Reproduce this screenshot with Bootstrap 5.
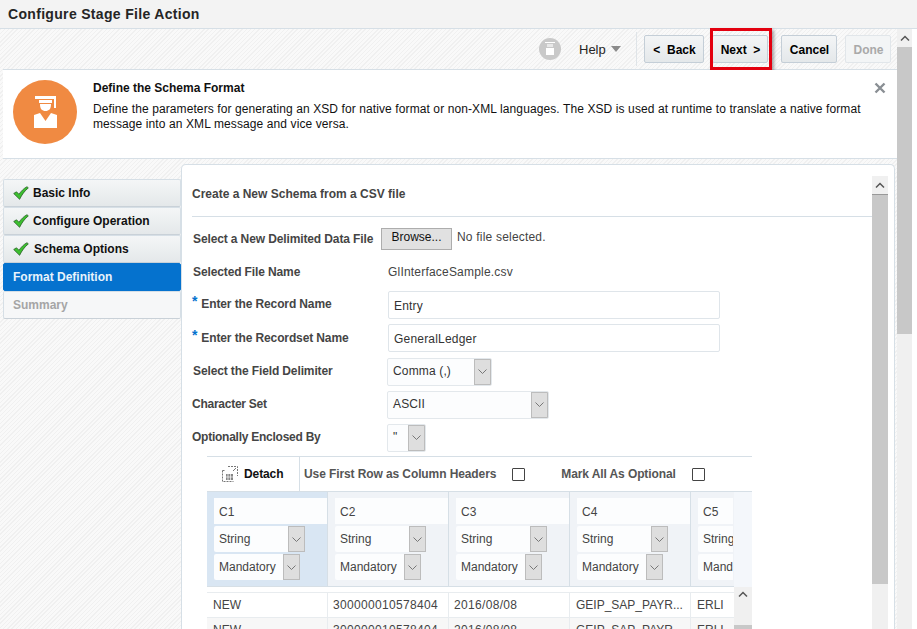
<!DOCTYPE html>
<html lang="en">
<head>
  <meta charset="UTF-8" />
  <title>Configure Stage File Action</title>
  <link href="https://cdn.jsdelivr.net/npm/bootstrap@5.3.0/dist/css/bootstrap.min.css" rel="stylesheet">
  <style>
    html, body { height: 629px; overflow: hidden; }
    body { font-family: "Liberation Sans", Arial, sans-serif; font-size: 12px; color: #252525; background: #fff; line-height: 15px; }
    .hatch { background: repeating-linear-gradient(135deg, #f0f0f0 0 1px, #f9f9f9 1px 3px); }
    .title-bar { height: 29px; background: #f3f3f3; border-bottom: 1px solid #d6dfe6; padding: 6px 8px 0; font-size: 14px; font-weight: 700; letter-spacing: .32px; line-height: 16px; color: #252525; }
    .main-col { width: 897px; height: 600px; padding-left: 3px; }
    .page-scroll { width: 15px; height: 600px; background: #f0f0f0; }
    .arrow-cell { height: 18px; background: #f0f0f0; }
    .thumb { background: #c8c8c8; }
    .tool-bar { height: 41px; border-bottom: 1px solid #d6dfe6; padding-right: 6px; }
    .help-ico { margin-right: 17px; }
    .help-txt { color: #252525; width: 57px; font-size: 13px; }
    .tri { width: 0; height: 0; border-left: 5px solid transparent; border-right: 5px solid transparent; border-top: 6px solid #8b8b8b; margin-left: 5px; }
    .tool-sep { width: 1px; height: 34px; background: #dfe4e8; margin: 0 7px 0 0; }
    .act-btn { height: 28px; font-size: 12px; font-weight: 700; color: #000; background: linear-gradient(#f3f5f6, #e4e8ea); border: 1px solid #c4ced7; border-radius: 2px; padding: 2px 0 0 1px; text-align: center; line-height: 24px; }
    .act-off { color: #a9a9a9; background: #f3f5f6; border-color: #e1e6ea; }
    .next-wrap { position: relative; }
    .red-box { position: absolute; left: -2px; top: -7px; width: 62px; height: 42px; border: 3px solid #e3000f; box-shadow: 2px 2px 3px rgba(0,0,0,.35); pointer-events: none; }
    .info-band { height: 89px; background: #fff; border-bottom: 1px solid #d6dfe6; padding: 10px 0 0 10px; position: relative; }
    .info-ico { width: 64px; height: 64px; flex: none; }
    .info-txt { color: #111; padding: 0 0 0 16px; width: 790px; margin-top: 1px; letter-spacing: .1px; }
    .info-txt b { display: block; margin-bottom: 6px; letter-spacing: 0; }
    .close-x { position: absolute; right: 11px; top: 12px; }
    .lower { height: 470px; padding-top: 5px; }
    .side-nav { width: 178px; flex: none; padding-top: 15px; }
    .step { height: 28px; border: 1px solid #d6dfe6; border-bottom-color: #c9d1d8; background: linear-gradient(#f4f6f7, #e4e8ea); border-radius: 2px; font-weight: 700; color: #111; padding-left: 9px; }
    .step svg { margin-right: 4px; }
    .step-gap { margin-left: 1px; }
    .step-on { background: #0572ce; color: #e8f2fb; border-color: #0572ce; }
    .step-off { background: #f6f7f8; color: #a5a5a5; }
    .work-panel { width: 714px; height: 470px; background: #fff; border: 1px solid #d6dfe6; border-bottom: 0; border-radius: 5px 5px 0 0; }
    .work-body { width: 690px; padding: 0 0 0 10px; flex: none; }
    .work-head { height: 52px; border-bottom: 1px solid #d6dfe6; font-weight: 700; color: #444; padding-top: 22px; }
    .frm-row { height: 33px; color: #454545; font-weight: 700; }
    .frm-label { width: 196px; flex: none; padding-left: 1px; letter-spacing: -.12px; }
    .frm-tight { padding-left: 0; letter-spacing: -.25px; }
    .req { color: #0572ce; font-size: 14px; line-height: 0; vertical-align: 2px; margin: 0 4px 0 -1px; }
    .browse-btn { width: 71px; height: 22px; background: #e1e1e1; border: 1px solid #adadad; font-size: 12px; color: #111; padding: 0 0 5px; margin-left: -7px; line-height: 14px; }
    .plain-val { font-weight: 400; color: #444; letter-spacing: .2px; }
    .file-none { margin: -4px 0 0 5px; }
    .txt-in.form-control { width: 332px; height: 28px; border: 1px solid #dfe5ea; border-radius: 2px; font-size: 12px; letter-spacing: .2px; color: #333; padding: 2px 5px 0; box-shadow: none; }
    .sel-box { height: 28px; background: #fcfdfe; border: 1px solid #e3e8ec; border-radius: 2px; font-weight: 400; letter-spacing: .15px; color: #333; padding-left: 5px; margin-left: -1px; overflow: hidden; }
    .sel-arrow { width: 17px; height: 26px; background: #dedede; border: 1px solid #bcbcbc; margin-left: auto; flex: none; }
    .grid-wrap { width: 545px; margin-left: 15px; margin-top: 2px; }
    .grid-tools { height: 35px; border-top: 1px solid #d6dfe6; font-weight: 700; color: #555; letter-spacing: -.1px; }
    .detach { width: 93px; border-right: 1px solid #d6dfe6; color: #111; padding-left: 15px; height: 34px; }
    .tick-box { width: 13px; height: 13px; border: 1px solid #444; border-radius: 1px; background: #fff; }
    .grid-main { width: 527px; overflow: hidden; }
    .head-row { height: 96px; background: #f0f3f7; border-top: 1px solid #d6dfe6; border-bottom: 1px solid #d6dfe6; }
    .head-cell { width: 121px; flex: none; padding: 6px 0 0 7px; border-right: 1px solid #d6dfe6; }
    .head-last { width: 42px; border-right: 0; overflow: hidden; }
    .head-sel { background: #d9e6f3; }
    .cell-in { height: 26px; background: #fcfdfe; margin-bottom: 2px; padding-left: 5px; color: #444; font-weight: 400; line-height: 26px; white-space: nowrap; overflow: hidden; }
    .cell-name { line-height: 28px; }
    .cell-sel { height: 26px; margin-bottom: 2px; }
    .cell-sel .cell-in { margin: 0; flex: none; border-radius: 2px 0 0 2px; }
    .cell-sel .sel-arrow { margin: 0; }
    .data-wrap { padding-top: 5px; }
    .data-row { height: 25px; border-top: 1px solid #e8ecef; font-weight: 400; color: #444; }
    .data-row > div { width: 121px; flex: none; padding-left: 6px; border-right: 1px solid #e8ecef; line-height: 24px; white-space: nowrap; }
    .data-row > div:last-child { width: 42px; border-right: 0; overflow: hidden; }
    .data-row .num-val { letter-spacing: .33px; padding-left: 5px; }
    .alt-row { background: #f7f7f7; }
    .grid-scroll { width: 18px; }
    .grid-scroll-top { height: 96px; background: #f4f7fb; border-top: 1px solid #d6dfe6; }
    .grid-scroll-trk { height: 38px; background: #f0f0f0; }
    .inner-scroll { width: 16px; margin: 11px 0 0 0; flex: none; }
    .inner-track { height: 47px; background: #f0f0f0; }
  </style>
</head>
<body>

  <div class="title-bar">Configure Stage File Action</div>

  <div class="d-flex">
    <div class="main-col hatch">

      <!-- toolbar -->
      <div class="tool-bar d-flex align-items-center justify-content-end">
        <svg class="help-ico" width="24" height="24" viewBox="0 0 24 24"><circle cx="12" cy="12" r="11" fill="#c9c9c9"/><path d="M7 5h10v1H7zM8 11h8v7H8z" fill="#fff"/><path d="M9 7h6v3H9z" fill="#e8e8e8"/></svg>
        <div class="help-txt d-flex align-items-center"><span>Help</span><span class="tri"></span></div>
        <div class="tool-sep"></div>
        <button class="act-btn" style="width:60px">&lt;&nbsp; Back</button>
        <div class="next-wrap ms-2"><button class="act-btn" style="width:56px">Next &nbsp;&gt;</button><div class="red-box"></div></div>
        <button class="act-btn" style="width:56px;margin-left:13px">Cancel</button>
        <button class="act-btn act-off" style="width:46px;margin-left:8px">Done</button>
      </div>

      <!-- info band -->
      <div class="info-band d-flex">
        <svg class="info-ico" viewBox="0 0 64 64">
          <circle cx="32" cy="32" r="32" fill="#f08a42"/>
          <path d="M22 16h21v3H22z" fill="#fff"/>
          <path d="M41 19h2v9h-2z" fill="#fff"/>
          <path d="M26 20h13v3H26z" fill="#fff"/>
          <path d="M27 24h11c0 5-2 7-5.500 7s-5.500-2-5.500-7z" fill="#fff"/>
          <path d="M21 35l6-2 5.500 8 5.500-8 6 2v13H21z" fill="#fff"/>
        </svg>
        <div class="info-txt">
          <b>Define the Schema Format</b>
          Define the parameters for generating an XSD for native format or non-XML languages. The XSD is used at runtime to translate a native format message into an XML message and vice versa.
        </div>
        <svg class="close-x" width="12" height="12" viewBox="0 0 12 12"><path d="M1.500 1.500l9 9M10.500 1.500l-9 9" stroke="#8a8f94" stroke-width="2.400"/></svg>
      </div>

      <div class="lower d-flex">
        <!-- steps -->
        <div class="side-nav">
          <div class="step d-flex align-items-center"><svg width="16" height="14" viewBox="0 0 16 14"><path d="M.7 7.500l2.800-1.700L6 8.300C8 5.300 10.500 2.600 14 .7l1.300 1.200C11.500 5 8.800 8.800 6.600 13.300z" fill="#3cc02f" stroke="#2a5f28" stroke-width=".8" stroke-linejoin="round"/></svg>Basic Info</div>
          <div class="step d-flex align-items-center"><svg width="16" height="14" viewBox="0 0 16 14"><path d="M.7 7.500l2.800-1.700L6 8.300C8 5.300 10.500 2.600 14 .7l1.300 1.200C11.500 5 8.800 8.800 6.600 13.300z" fill="#3cc02f" stroke="#2a5f28" stroke-width=".8" stroke-linejoin="round"/></svg>Configure Operation</div>
          <div class="step d-flex align-items-center"><svg width="16" height="14" viewBox="0 0 16 14"><path d="M.7 7.500l2.800-1.700L6 8.300C8 5.300 10.500 2.600 14 .7l1.300 1.200C11.500 5 8.800 8.800 6.600 13.300z" fill="#3cc02f" stroke="#2a5f28" stroke-width=".8" stroke-linejoin="round"/></svg><span class="step-gap">Schema Options</span></div>
          <div class="step step-on d-flex align-items-center">Format Definition</div>
          <div class="step step-off d-flex align-items-center">Summary</div>
        </div>

        <!-- work area -->
        <div class="work-panel d-flex">
          <div class="work-body">
            <div class="work-head">Create a New Schema from a CSV file</div>

            <div class="frm-row d-flex align-items-center mt-1" style="height:36px">
              <div class="frm-label">Select a New Delimited Data File</div>
              <button class="browse-btn">Browse...</button>
              <span class="plain-val file-none">No file selected.</span>
            </div>
            <div class="frm-row d-flex align-items-center" style="height:31px">
              <div class="frm-label">Selected File Name</div>
              <span class="plain-val">GlInterfaceSample.csv</span>
            </div>
            <div class="frm-row d-flex align-items-center">
              <div class="frm-label"><span class="req">*</span>Enter the Record Name</div>
              <input class="form-control txt-in" value="Entry">
            </div>
            <div class="frm-row d-flex align-items-center mb-0" style="height:34px">
              <div class="frm-label"><span class="req">*</span>Enter the Recordset Name</div>
              <input class="form-control txt-in" value="GeneralLedger">
            </div>
            <div class="frm-row d-flex align-items-center">
              <div class="frm-label">Select the Field Delimiter</div>
              <div class="sel-box d-flex align-items-center" style="width:105px">Comma (,)
                <div class="sel-arrow d-flex align-items-center justify-content-center"><svg width="9" height="5" viewBox="0 0 9 5"><path d="M.5.500l4 4 4-4" fill="none" stroke="#777"/></svg></div>
              </div>
            </div>
            <div class="frm-row d-flex align-items-center">
              <div class="frm-label frm-tight">Character Set</div>
              <div class="sel-box d-flex align-items-center" style="width:162px">ASCII
                <div class="sel-arrow d-flex align-items-center justify-content-center"><svg width="9" height="5" viewBox="0 0 9 5"><path d="M.5.500l4 4 4-4" fill="none" stroke="#777"/></svg></div>
              </div>
            </div>
            <div class="frm-row d-flex align-items-center">
              <div class="frm-label frm-tight">Optionally Enclosed By</div>
              <div class="sel-box d-flex align-items-center" style="width:39px">"
                <div class="sel-arrow d-flex align-items-center justify-content-center"><svg width="9" height="5" viewBox="0 0 9 5"><path d="M.5.500l4 4 4-4" fill="none" stroke="#777"/></svg></div>
              </div>
            </div>

            <div class="grid-wrap">
              <div class="grid-tools d-flex align-items-center">
                <div class="detach d-flex align-items-center">
                  <svg style="margin-right:6px" width="16" height="16" viewBox="0 0 16 16"><path d="M.5 4.500v11h11M.5 4.500h3M6 .5h9.500V10" fill="none" stroke="#777" stroke-dasharray="2 1"/><path d="M4 8h7v6H4z" fill="#888"/><path d="M6 8v6M8.500 8v6M4 11h7" stroke="#fff" stroke-width=".7"/><path d="M11 5l3-3" stroke="#777"/></svg>
                  Detach
                </div>
                <span class="ms-1">Use First Row as Column Headers</span>
                <span class="tick-box" style="margin-left:16px"></span>
                <span style="margin-left:36px">Mark All As Optional</span>
                <span class="tick-box" style="margin-left:16px"></span>
              </div>

              <div class="d-flex">
                <div class="grid-main">
                  <div class="head-row d-flex" id="headRow"></div>
                  <div class="data-wrap" id="dataRows"></div>
                </div>
                <div class="grid-scroll">
                  <div class="grid-scroll-top"></div>
                  <div class="grid-scroll-trk d-flex justify-content-center pt-1" style="height:38px">
                    <svg width="10" height="7" viewBox="0 0 10 7"><path d="M1 5.500l4-4 4 4" fill="none" stroke="#555" stroke-width="1.500"/></svg>
                  </div>
                  <div class="thumb" style="height:10px"></div>
                </div>
              </div>
            </div>
          </div>

          <!-- panel scrollbar -->
          <div class="inner-scroll">
            <div class="arrow-cell d-flex align-items-center justify-content-center"><svg width="10" height="7" viewBox="0 0 10 7"><path d="M1 5.500l4-4 4 4" fill="none" stroke="#555" stroke-width="1.500"/></svg></div>
            <div class="thumb" style="height:390px;border-top:1px solid #999"></div>
            <div class="inner-track"></div>
          </div>
        </div>
      </div>
    </div>

    <div class="page-scroll">
      <div class="arrow-cell d-flex align-items-center justify-content-center"><svg width="10" height="7" viewBox="0 0 10 7"><path d="M1 5.500l4-4 4 4" fill="none" stroke="#555" stroke-width="1.500"/></svg></div>
      <div class="thumb" style="height:287px"></div>
    </div>
  </div>

  <script>
    const chev = '<div class="sel-arrow d-flex align-items-center justify-content-center"><svg width="9" height="5" viewBox="0 0 9 5"><path d="M.5.500l4 4 4-4" fill="none" stroke="#777"/></svg></div>';
    const head = document.getElementById('headRow');
    ['C1', 'C2', 'C3', 'C4', 'C5'].forEach((name, i) => {
      const cell = document.createElement('div');
      cell.className = 'head-cell' + (i === 0 ? ' head-sel' : '') + (i === 4 ? ' head-last' : '');
      cell.innerHTML = `
        <div class="cell-in cell-name">${name}</div>
        <div class="cell-sel d-flex"><div class="cell-in" style="width:74px">String</div>${chev}</div>
        <div class="cell-sel d-flex"><div class="cell-in" style="width:69px">Mandatory</div>${chev}</div>`;
      head.appendChild(cell);
    });

    const rows = document.getElementById('dataRows');
    [0, 1].forEach(i => {
      const row = document.createElement('div');
      row.className = 'data-row d-flex' + (i === 1 ? ' alt-row' : '');
      row.innerHTML = '<div>NEW</div><div class="num-val">300000010578404</div><div class="num-val">2016/08/08</div><div>GEIP_SAP_PAYR...</div><div>ERLI</div>';
      rows.appendChild(row);
    });
  </script>
  <script src="https://cdn.jsdelivr.net/npm/bootstrap@5.3.0/dist/js/bootstrap.bundle.min.js"></script>
</body>
</html>
